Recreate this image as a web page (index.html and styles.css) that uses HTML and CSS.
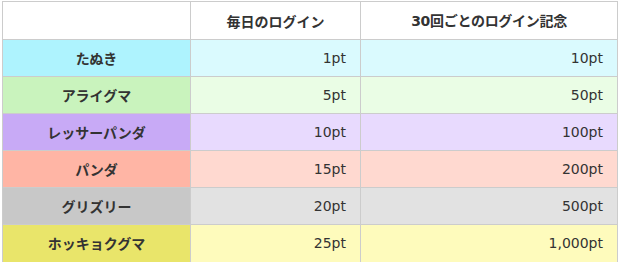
FILE: index.html
```html
<!DOCTYPE html>
<html lang="ja">
<head>
<meta charset="utf-8">
<link rel="stylesheet" href="styles.css">
</head>
<body>
<table class="pt-table">
  <colgroup>
    <col class="c1"><col class="c2"><col class="c3">
  </colgroup>
  <thead>
    <tr><th></th><th>毎日のログイン</th><th>30回ごとのログイン記念</th></tr>
  </thead>
  <tbody>
    <tr class="r1"><th>たぬき</th><td>1pt</td><td>10pt</td></tr>
    <tr class="r2"><th>アライグマ</th><td>5pt</td><td>50pt</td></tr>
    <tr class="r3"><th>レッサーパンダ</th><td>10pt</td><td>100pt</td></tr>
    <tr class="r4"><th>パンダ</th><td>15pt</td><td>200pt</td></tr>
    <tr class="r5"><th>グリズリー</th><td>20pt</td><td>500pt</td></tr>
    <tr class="r6"><th>ホッキョクグマ</th><td>25pt</td><td>1,000pt</td></tr>
  </tbody>
</table>
</body>
</html>
```
FILE: styles.css
```css
html, body { margin: 0; padding: 0; background: #fff; }
body { padding: 1px 0 0 2px; }
.pt-table {
  border-collapse: collapse;
  table-layout: fixed;
  width: 615px;
  font-family: "DejaVu Sans", "Noto Sans CJK JP", sans-serif;
  font-size: 14px;
  color: #333;
}
.c1 { width: 188px; }
.c2 { width: 170px; }
.c3 { width: 257px; }
.pt-table th, .pt-table td {
  border: 1px solid #ccc;
  height: 36px;
  padding: 0 14px;
  box-sizing: border-box;
  line-height: 20px;
}
.pt-table thead th { height: 38px; text-align: center; font-weight: bold; background: #fff; font-family: "Noto Sans CJK JP", sans-serif; }
.pt-table thead th:nth-child(3) { font-family: "DejaVu Sans", "Noto Sans CJK JP", sans-serif; letter-spacing: -0.3px; }
.pt-table tbody th { text-align: center; font-weight: bold; font-family: "Noto Sans CJK JP", sans-serif; }
.pt-table tbody td { text-align: right; }
.pt-table tbody tr { height: 37px; }
.r1 th { background: #aef3fe; } .r1 td { background: #dafafe; }
.r2 th { background: #c9f3bd; } .r2 td { background: #eafde5; }
.r3 th { background: #c8aaf6; } .r3 td { background: #e8dafe; }
.r4 th { background: #ffb5a5; } .r4 td { background: #ffd9d0; }
.r5 th { background: #c8c8c8; } .r5 td { background: #e2e2e2; }
.r6 th { background: #e9e56a; } .r6 td { background: #fefbbc; }
.r6 th, .r6 td { border-bottom: none; }
```
